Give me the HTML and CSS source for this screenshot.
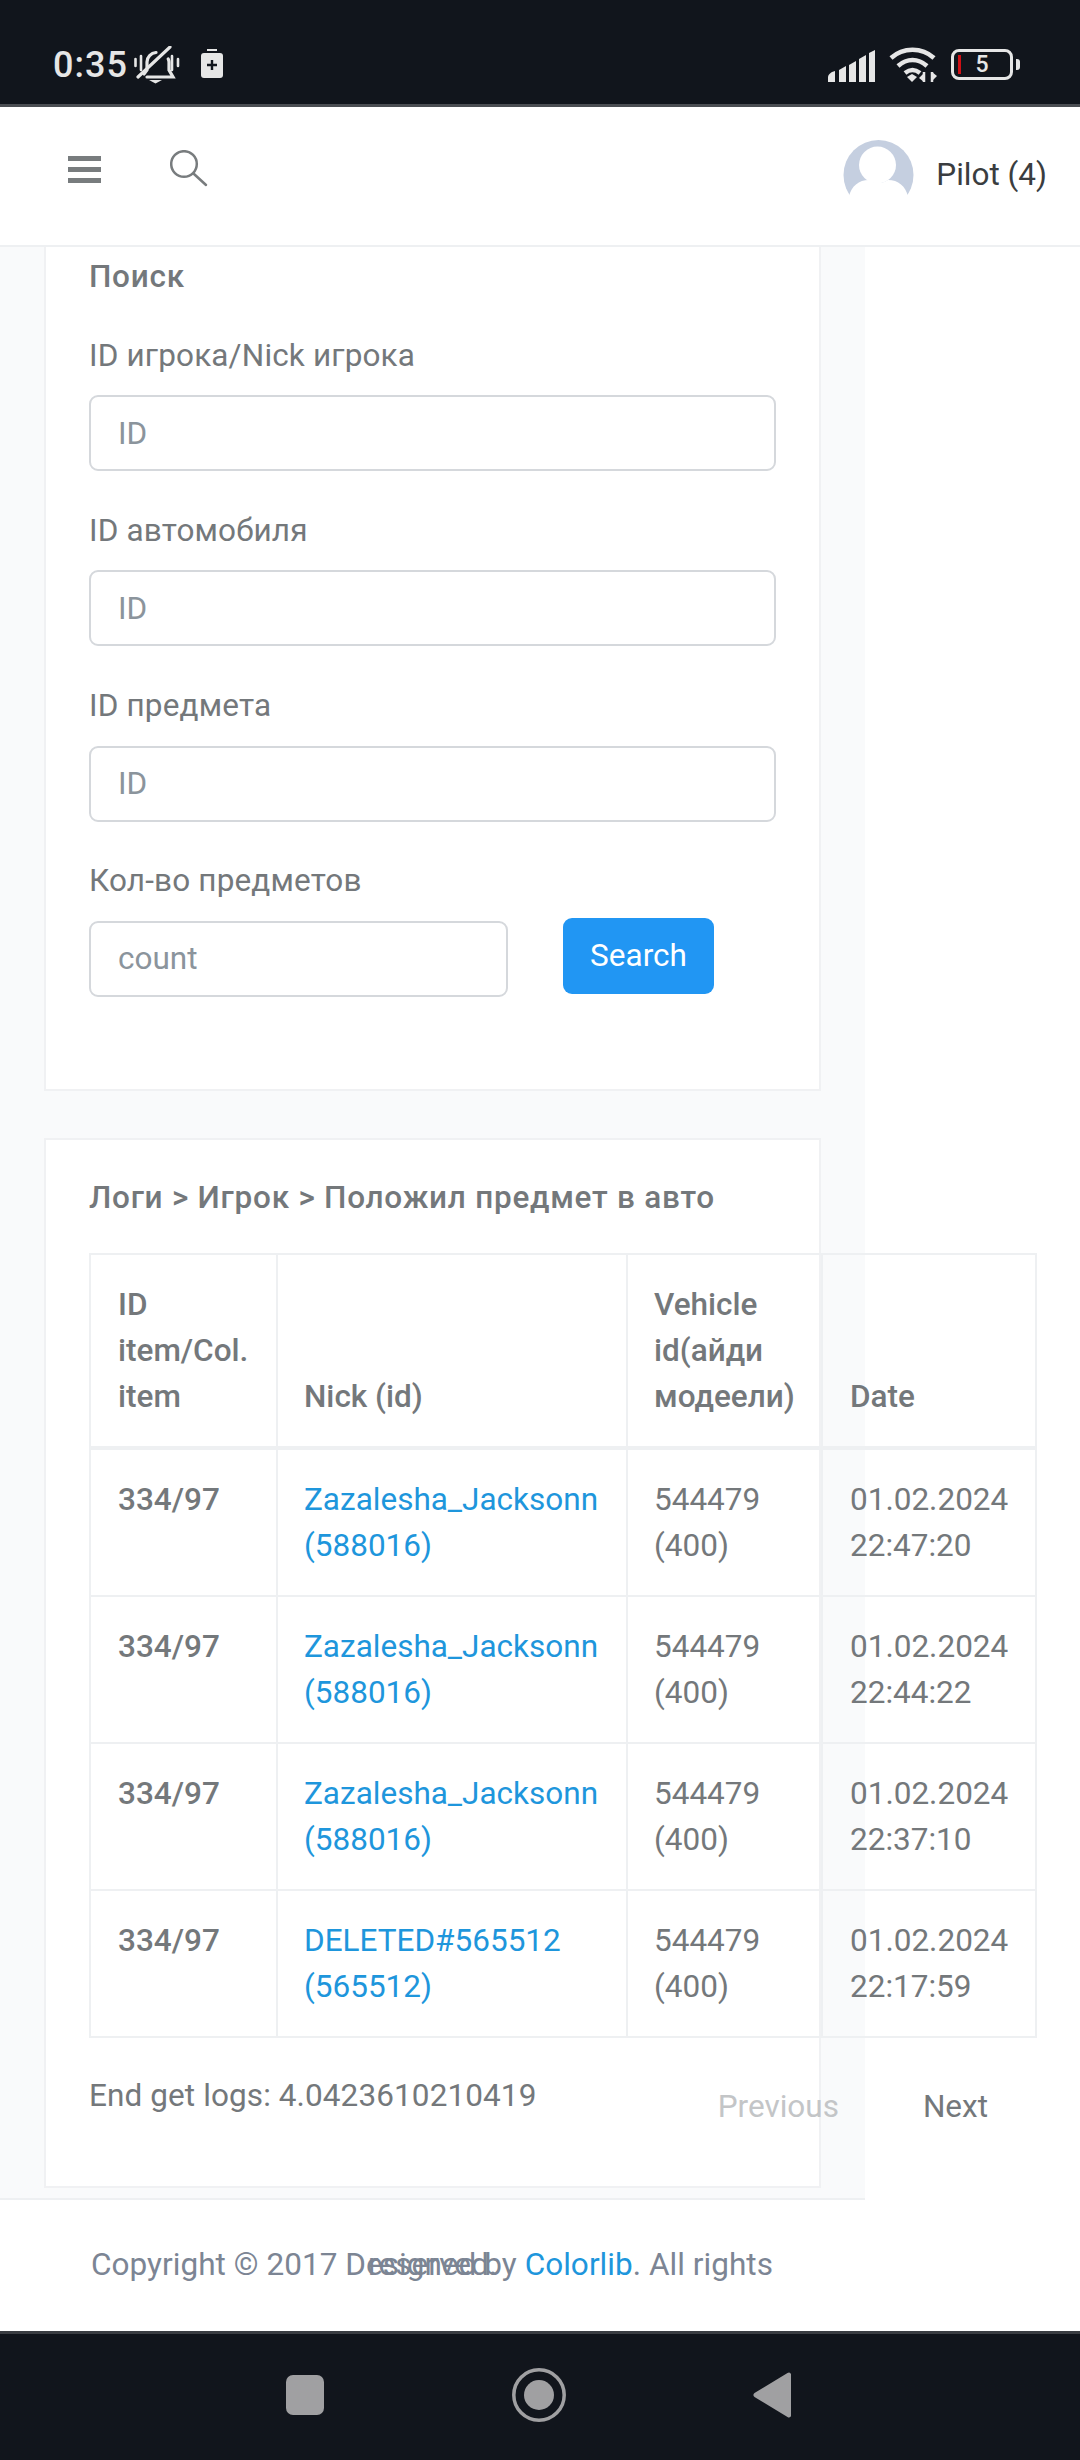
FILE: index.html
```html
<!DOCTYPE html>
<html lang="en">
<head>
  <meta charset="UTF-8">
  <meta name="viewport" content="width=device-width, initial-scale=1.0">
  <title>Логи</title>
  <link rel="stylesheet" href="styles.css">
</head>
<body>
  <div class="statusBar">
    <span class="clock">0:35</span>
    <svg class="bell" width="46" height="38" viewBox="0 0 46 38" fill="none" stroke="#e6e6e6" stroke-width="3.2" stroke-linecap="round">
      <path d="M1.500 13v7M7 10v14M38 10v14M44 13v7" stroke-width="2.600"/>
      <path d="M13 31h26l-4-7v-8c0-1-.3-2-.8-3M10 28l3-4v-8c0-5 4-9 9-9.500"/>
      <path d="M4 31L36 1"/>
      <path d="M15 34h13l-6.500 3.500z" fill="#e6e6e6" stroke="none"/>
    </svg>
    <svg class="saver" width="24" height="30" viewBox="0 0 24 30">
      <rect x="7" y="0" width="10" height="2" fill="#e6e6e6"/>
      <rect x="1" y="4" width="22" height="25" rx="3" fill="#e6e6e6"/>
      <path d="M7 16h10M12 11v10" stroke="#11151c" stroke-width="2.400"/>
    </svg>
    <span class="statusGap"></span>
    <svg class="signal" width="48" height="32" viewBox="0 0 48 32" fill="#e6e6e6">
      <path d="M0 27c0-2 2-4 4-5l3-1v11H0z"/>
      <path d="M11 20l7-4v16h-7z"/>
      <path d="M21 15l7-4v21h-7z"/>
      <path d="M31 9l7-4v27h-7z"/>
      <path d="M41 3l6-3v32h-6z"/>
    </svg>
    <svg class="wifi" width="48" height="36" viewBox="0 0 48 36" fill="none" stroke="#e6e6e6" stroke-width="4.500">
      <path d="M2 11C14 0 33 0 45 11"/>
      <path d="M9 19c9-8 20-8 29 0"/>
      <path d="M16 26c5-4 10-4 15 0"/>
      <path d="M18 30l5-3 5 3-5 5z" fill="#e6e6e6" stroke="none"/>
      <path d="M35 25v10M43 25v10" stroke-width="2.500"/>
      <path d="M30 31l5-5v9zM48 29l-5-4v9z" fill="#e6e6e6" stroke="none"/>
    </svg>
    <div class="battery">
      <div class="batteryBody"><i class="batteryLow"></i><span>5</span></div>
      <i class="batteryNub"></i>
    </div>
  </div>

  <div class="navBar">
    <div class="burger"><i></i><i></i><i></i></div>
    <svg class="searchIcon" width="38" height="38" viewBox="0 0 38 38" fill="none" stroke="#787c7e" stroke-width="2.500">
      <circle cx="14" cy="14" r="12.800"/>
      <path d="M24 24l12 11" stroke-linecap="round"/>
    </svg>
    <div class="navUser">
      <svg class="avatar" width="71" height="57" viewBox="0 0 71 57">
        <circle cx="35.500" cy="35" r="35" fill="#c5cfe0"/>
        <circle cx="34.500" cy="25" r="18.500" fill="#fff"/>
        <path d="M6 57c2-11 10-17 20-17 6 4 13 4 19 0 10 0 18 6 20 17v6H6z" fill="#fff"/>
      </svg>
      <span class="userName">Pilot (4)</span>
    </div>
  </div>

  <div class="content">
    <div class="card searchCard">
      <h4 class="cardTitle">Поиск</h4>
      <div class="field">
        <label>ID игрока/Nick игрока</label>
        <input type="text" placeholder="ID">
      </div>
      <div class="field">
        <label>ID автомобиля</label>
        <input type="text" placeholder="ID">
      </div>
      <div class="field">
        <label>ID предмета</label>
        <input type="text" placeholder="ID">
      </div>
      <div class="field">
        <label>Кол-во предметов</label>
        <div class="countRow">
          <input class="countInput" type="text" placeholder="count">
          <button class="searchBtn">Search</button>
        </div>
      </div>
    </div>

    <div class="card logsCard">
      <h4 class="cardTitle">Логи &gt; Игрок &gt; Положил предмет в авто</h4>
      <table class="logs">
        <thead>
          <tr><th>ID<br>item/Col.<br>item</th><th>Nick (id)</th><th>Vehicle<br>id(айди<br>модеели)</th><th>Date</th></tr>
        </thead>
        <tbody>
          <tr><td class="itemId">334/97</td><td><a href="#">Zazalesha_Jacksonn (588016)</a></td><td>544479 (400)</td><td>01.02.2024 22:47:20</td></tr>
          <tr><td class="itemId">334/97</td><td><a href="#">Zazalesha_Jacksonn (588016)</a></td><td>544479 (400)</td><td>01.02.2024 22:44:22</td></tr>
          <tr><td class="itemId">334/97</td><td><a href="#">Zazalesha_Jacksonn (588016)</a></td><td>544479 (400)</td><td>01.02.2024 22:37:10</td></tr>
          <tr><td class="itemId">334/97</td><td><a href="#">DELETED#565512 (565512)</a></td><td>544479 (400)</td><td>01.02.2024 22:17:59</td></tr>
        </tbody>
      </table>
      <div class="logsFoot">
        <span class="timing">End get logs: 4.0423610210419</span>
        <div class="pager"><span class="prev">Previous</span><span class="next">Next</span></div>
      </div>
    </div>
  </div>

  <div class="footer">
    <p class="copy">Copyright © 2017 Designed by <a href="#">Colorlib</a>. All rights <span class="copyWrapped">reserved.</span></p>
  </div>

  <div class="sysNav">
    <i class="navSquare"></i>
    <svg width="54" height="54" viewBox="0 0 54 54" fill="none">
      <circle cx="27" cy="27" r="25.200" stroke="#a0a0a2" stroke-width="3.500"/>
      <circle cx="27" cy="27" r="15" fill="#a0a0a2"/>
    </svg>
    <svg width="38" height="46" viewBox="0 0 38 46">
      <path d="M36 .5c1 0 2 1 2 2v41c0 1-1 2-2 2-.5 0-1-.2-1.500-.6L1.500 25c-1.500-1-1.500-3 0-4L34.500 1c.5-.3 1-.5 1.500-.5z" fill="#a0a0a2"/>
    </svg>
  </div>
</body>
</html>
```

FILE: styles.css
```css
html,body{margin:0;padding:0;background:#fff;}
body{width:1080px;height:2460px;overflow:hidden;font-family:Roboto,"Noto Sans",sans-serif;font-size:31.5px;line-height:47px;color:#74787b;}

/* status bar */
.statusBar{height:104px;box-sizing:border-box;background:#11151c;display:flex;align-items:flex-start;padding:46px 60px 0 53px;color:#e6e6e6;}
.clock{font-size:36px;font-weight:500;line-height:38px;letter-spacing:1px;margin-right:6px;}
.bell{margin-right:20px;}
.saver{margin-top:3px;}
.statusGap{flex:1;}
.signal{margin:4px 13px 0 0;}
.wifi{margin:1px 14px 0 0;}
.battery{display:flex;align-items:center;margin-top:3px;}
.batteryBody{width:62px;height:31px;box-sizing:border-box;border:3px solid #e6e6e6;border-radius:8px;display:flex;align-items:center;justify-content:center;position:relative;font-size:23px;font-weight:500;line-height:25px;}
.batteryLow{position:absolute;left:4px;top:3px;width:3px;height:19px;background:#d01015;}
.batteryNub{width:4px;height:11px;margin-left:3px;background:#e6e6e6;border-radius:0 3px 3px 0;}

/* top nav */
.navBar{height:143px;box-sizing:border-box;background:#fff;border-top:3px solid #4a4d52;border-bottom:2px solid #eef0f2;display:flex;align-items:flex-start;padding:0 33px 0 68px;}
.burger{width:33px;margin-top:49px;display:flex;flex-direction:column;gap:6px;}
.burger i{display:block;height:5px;background:#787c7e;}
.searchIcon{margin:43px 0 0 69px;}
.navUser{margin-left:auto;display:flex;align-items:flex-start;}
.avatar{margin:33px 22px 0 0;}
.userName{color:#3a3d40;margin-top:44px;}

/* page body */
.content{width:865px;height:1953px;box-sizing:border-box;background:#f9fafb;border-bottom:2px solid #eef0f2;padding:0 0 0 44px;}
.card{width:777px;box-sizing:border-box;background:#fff;border:2px solid #f0f1f3;padding:0 43px;}
.cardTitle{margin:0;font-size:31.5px;font-weight:500;letter-spacing:.75px;color:#74787b;}
.searchCard{height:844px;border-top:0;padding-top:6px;}
.searchCard .cardTitle{margin-bottom:31.5px;}
.field{margin-bottom:35.8px;}
.field label{display:block;height:47px;margin-bottom:16.5px;letter-spacing:.15px;}
.field input{display:block;width:687px;height:76px;box-sizing:border-box;border:2px solid #d5d8dc;border-radius:9px;padding:0 27px;font:inherit;color:#74787b;background:#fff;outline:none;}
.field input::placeholder{color:#8b949c;opacity:1;}
.countRow{display:flex;align-items:flex-start;}
.field .countInput{width:419px;}
.searchBtn{width:151px;height:76px;margin:-3px 0 0 55px;border:0;border-radius:9px;background:#2196f3;color:#fff;font:inherit;}
.logsCard{height:1050px;margin-top:47px;padding-top:34px;}
.logsCard .cardTitle{margin-bottom:32px;}

/* logs table */
.logs{width:948px;table-layout:fixed;border-collapse:collapse;line-height:46px;}
.logs th,.logs td{box-sizing:border-box;border:2px solid #eef0f2;padding:26.5px 27px;text-align:left;}
.logs th:nth-child(2),.logs th:nth-child(3),.logs td:nth-child(2),.logs td:nth-child(3){padding-left:26px;}
.logs th{vertical-align:bottom;font-weight:500;border-bottom-width:4px;}
.logs td{vertical-align:top;}
.logs th:nth-child(1){width:187px;}
.logs th:nth-child(2){width:350px;}
.logs th:nth-child(3){width:195px;}
.logs a{color:#1e96dc;text-decoration:none;}
.logs .itemId{font-weight:500;}
.logsFoot{display:flex;align-items:flex-start;justify-content:space-between;width:948px;padding-top:34px;letter-spacing:.1px;}
.pager{display:flex;margin-top:11px;padding-right:49px;letter-spacing:0;}
.prev{color:#c3c5c7;margin-right:84px;}
.next{color:#74787b;}

/* footer */
.footer{height:131px;box-sizing:border-box;padding:41px 0 0 91px;background:#fff;}
.copy{margin:0;position:relative;color:#7c8594;white-space:nowrap;letter-spacing:.04px;}
.copy a{color:#1e96dc;text-decoration:none;}
.copyWrapped{position:absolute;left:277px;top:0;}

/* android nav */
.sysNav{height:130px;box-sizing:border-box;background:#11151c;border-top:3px solid #3a3d42;display:flex;align-items:center;padding:0 289px 6px 286px;justify-content:space-between;}
.navSquare{width:38px;height:40px;background:#a0a0a2;border-radius:7px;}
```
